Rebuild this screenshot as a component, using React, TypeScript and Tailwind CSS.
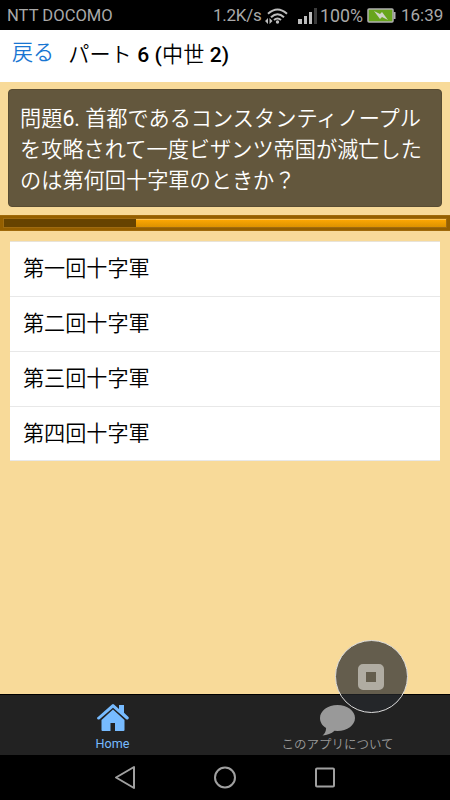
import React, { useState } from 'react';

const choices = ['第一回十字軍', '第二回十字軍', '第三回十字軍', '第四回十字軍'];

const StatusBar = () => (
  <div className="flex h-[30px] shrink-0 items-center whitespace-nowrap bg-black pl-[7px] pr-[7px] pt-[2px] text-[17px] leading-none text-[#a9a9a9]">
    <span className="text-[16.6px]">NTT DOCOMO</span>
    <div className="ml-auto flex items-center">
      <span className="w-[52px] text-[17px] tracking-[-0.25px]">1.2K/s</span>
      <svg className="h-4 w-[24px]" viewBox="0 0 24 16" fill="none" stroke="#bdbdbd" strokeWidth="2">
        <path d="M3 5.8Q12.5-2.8 22 5.8M6 9.2Q12.5 3.2 19 9.2M9 12Q12.5 9 16 12" />
        <circle cx="12.5" cy="14" r="1.7" fill="#bdbdbd" stroke="none" />
        <path d="M0 13l3-3v6zM7.5 13l-3-3v6z" fill="#bdbdbd" stroke="none" />
      </svg>
      <svg className="ml-[9px] h-4 w-[19px]" viewBox="0 0 19 16" fill="#bdbdbd">
        <rect x="0" y="11" width="4" height="5" />
        <rect x="6" y="8" width="3" height="8" />
        <rect x="11" y="4" width="3" height="12" />
        <rect x="16" y="0" width="3" height="16" fill="#3c3c3c" />
      </svg>
      <span className="ml-[3px] w-[43px] text-[17.8px]">100%</span>
      <svg className="ml-[4px] h-[15px] w-[29px]" viewBox="0 0 29 15">
        <rect x="1" y="1" width="25" height="13" rx="1" fill="#68a51c" stroke="#b0b0b0" strokeWidth="1.5" />
        <rect x="26.5" y="4" width="2" height="7" fill="#b0b0b0" />
        <path d="M7 3l6 3 2-2 6 8-6-3-2 2z" fill="#d0d4c8" />
      </svg>
      <span className="ml-[5px] w-[42px] text-[17px]">16:39</span>
    </div>
  </div>
);

const Header = () => (
  <header className="flex h-[52px] shrink-0 whitespace-nowrap bg-white text-[21.1px]">
    <a href="#" className="ml-3 mt-[8px] h-[30px] font-[350] leading-[30px] text-[#1976d2]">
      戻る
    </a>
    <h1 className="ml-[14px] mt-[10px] h-[30px] font-medium leading-[30px] tracking-[0.1px] text-black">
      <span className="font-[350]">パート</span> 6 (<span className="font-[350]">中世</span> 2)
    </h1>
  </header>
);

const Question = () => (
  <div className="ml-2 mt-[7px] h-[118px] w-[434px] whitespace-nowrap rounded-[4px] border border-[#594c32] bg-[#63573d] pl-[11px] pt-[13px] text-[21.2px] font-[350] leading-[31px] text-white">
    <p>
      問題<span className="font-normal">6. </span>首都であるコンスタンティノープル
    </p>
    <p>を攻略されて一度ビザンツ帝国が滅亡した</p>
    <p>のは第何回十字軍のときか？</p>
  </div>
);

const ProgressBar = () => (
  <div className="mt-2 h-4 border-y border-[#a06a0a] bg-[#945f00] px-[3px] py-[2px]">
    <div className="flex h-[10px] border border-[#9f6b10] bg-linear-to-b from-[#ffa904] to-[#dc9200]">
      <div className="w-[132px] bg-[#664300]" />
      <div className="grow border-t border-[#ffc14a]" />
    </div>
  </div>
);

const HomeIcon = () => (
  <svg className="h-[28px] w-[32px]" viewBox="0 0 32 28" fill="#77bbff">
    <path d="M.6 13.3L15 .5q1-.8 2 0l5 4.500V1h5v7.800L31.500 13q.7 1-.2 2t-2.100.2L16 3.800 2.600 15.300Q1.300 16 .4 15t.2-1.700z" />
    <path d="M16 5.600L27.500 16v10q0 1-1 1H18v-8h-4.500v8H5.500q-1 0-1-1V16z" />
  </svg>
);

const ChatIcon = () => (
  <svg className="h-[31px] w-[35px]" viewBox="0 0 35 31" fill="#999">
    <path d="M17.500 0C27.200 0 35 5.700 35 13s-7.800 13-17.500 13l-3-.2C11.500 28.500 7 30.500 2.500 30.500 5 28.500 6 26 6.100 23 2.300 20.700 0 17 0 13 0 5.700 7.800 0 17.500 0z" />
  </svg>
);

const TabBar = () => (
  <nav className="flex h-[61px] shrink-0 border-t border-black bg-[#222] text-[12.5px] leading-4">
    <a href="#" className="flex w-[225px] flex-col items-center pt-[9px] text-[#77bbff]">
      <HomeIcon />
      <span className="mt-[4px] text-[12.6px]">Home</span>
    </a>
    <a href="#" className="flex w-[225px] flex-col items-center pt-[10px] text-[#999]">
      <ChatIcon />
      <span className="mt-px whitespace-nowrap font-[350]">このアプリについて</span>
    </a>
  </nav>
);

const SystemNav = () => (
  <div className="flex h-[45px] shrink-0 justify-center bg-black">
    <svg className="h-[45px] w-[240px]" viewBox="0 0 240 45" fill="none" stroke="#a0a0a0" strokeWidth="2">
      <path d="M29 12v21L11 22.500z" strokeLinejoin="round" />
      <circle cx="120" cy="22.500" r="10" />
      <rect x="211" y="13.500" width="18" height="18" rx="1" />
    </svg>
  </div>
);

const App = () => {
  const [selected, setSelected] = useState<number | null>(null);

  return (
    <div className="relative flex h-[800px] w-[450px] flex-col overflow-hidden bg-[#f8da99] font-[Roboto,'Noto_Sans_CJK_JP',sans-serif]">
      <StatusBar />
      <Header />

      <main className="grow">
        <Question />
        <ProgressBar />

        {/* Choices */}
        <ul className="mx-[10px] mt-[10px] border-t border-[#e8e3d8] bg-white">
          {choices.map((choice, index) => (
            <li key={choice} className="h-[55px] border-b border-[#e8e8e8] last:h-[54px]">
              <button
                onClick={() => setSelected(index)}
                className={`block h-[54px] w-full pl-[13px] text-left text-[21.1px] font-[350] text-black ${
                  selected === index ? 'bg-gray-100' : ''
                }`}
              >
                {choice}
              </button>
            </li>
          ))}
        </ul>
      </main>

      <TabBar />
      <SystemNav />

      {/* Floating assist button */}
      <button className="absolute left-[334.5px] top-[640px] flex h-[73px] w-[73px] items-center justify-center rounded-full border-[1.5px] border-[#ddd] bg-[#25282c]/70">
        <span className="flex h-[26px] w-[26px] items-center justify-center rounded-[5px] border-8 border-[#b0aca2]" />
      </button>
    </div>
  );
};

export default App;
